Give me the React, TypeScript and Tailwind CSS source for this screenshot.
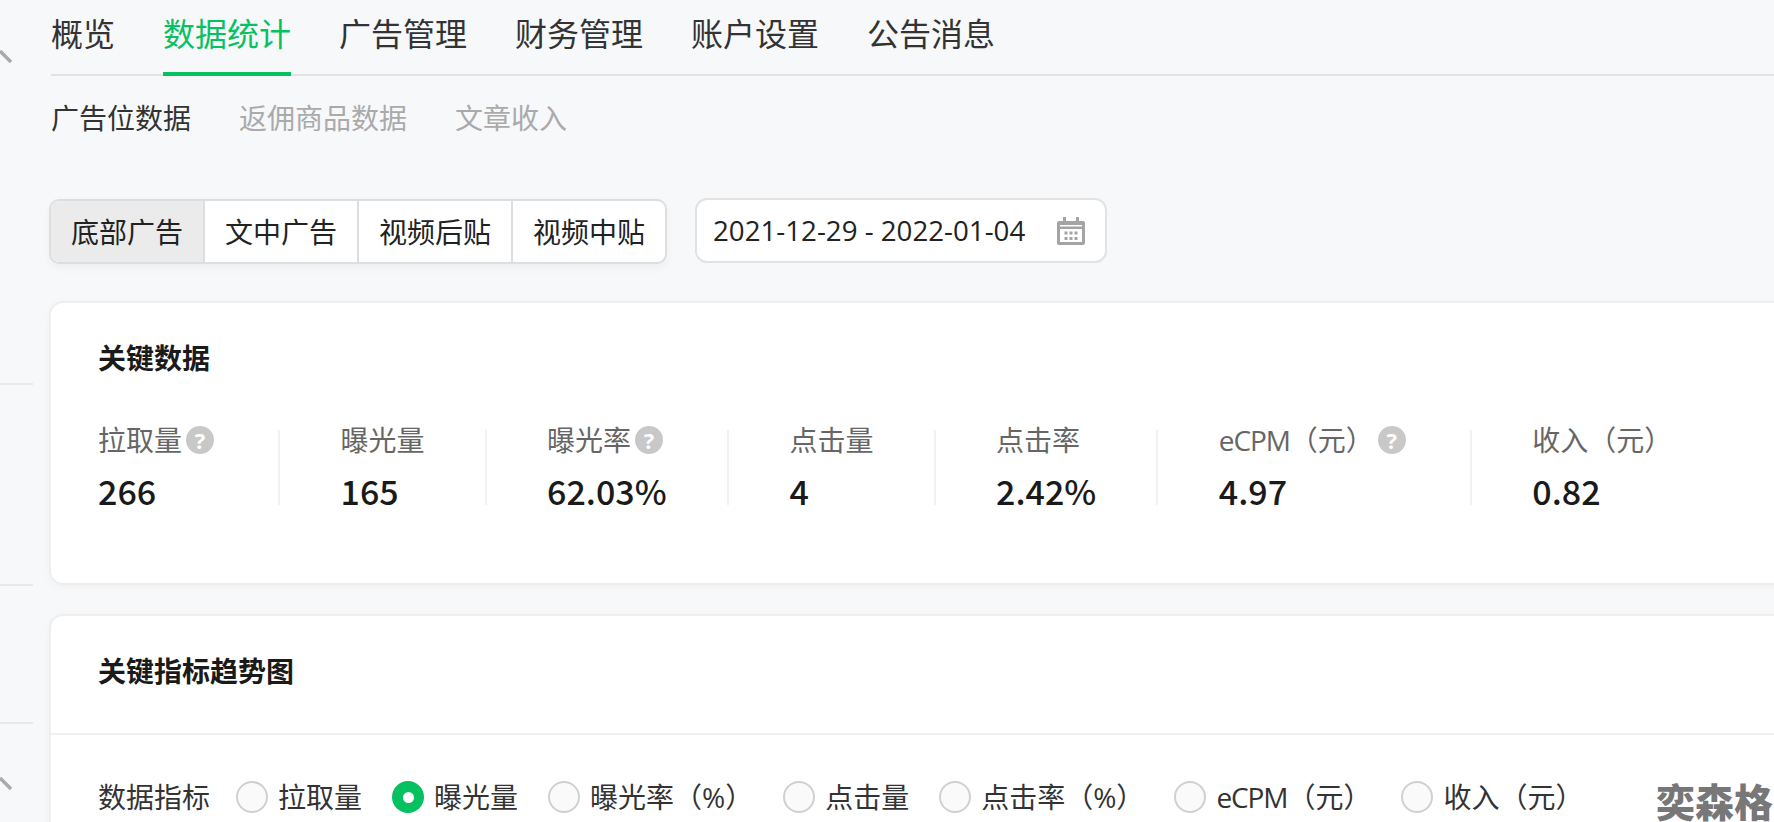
import type { ReactNode } from "react";

const sans = "font-['Open_Sans','Noto_Sans_CJK_SC',sans-serif]";

function Chevron() {
  return (
    <svg width="12" height="14" viewBox="0 0 12 14" className="block">
      <path d="M0 1 L11 12" stroke="#aaaaaa" strokeWidth="3.5" fill="none" />
    </svg>
  );
}

function Help() {
  return (
    <span className="ml-1 mr-1 flex h-7 w-7 shrink-0 items-center justify-center rounded-full bg-[#c8c8c8] text-[22px] leading-none font-bold text-white">
      ?
    </span>
  );
}

function Stat({ label, value, help, last }: { label: ReactNode; value: string; help?: boolean; last?: boolean }) {
  return (
    <div className={`flex h-[75px] flex-col justify-between ${last ? "" : "border-r-2 border-[#f2f2f2] pr-[60px]"}`}>
      <div className="flex h-5 items-center text-[28px] leading-5 text-[#666]">
        <span className="whitespace-nowrap">{label}</span>
        {help && <Help />}
      </div>
      <div className="mb-[2px] font-['Noto_Sans_CJK_SC',sans-serif] text-[34px] leading-6 font-medium text-[#1a1a1a]">{value}</div>
    </div>
  );
}

function Radio({ label, checked }: { label: ReactNode; checked?: boolean }) {
  return (
    <div className="flex items-center gap-[10px]">
      {checked ? (
        <span className="flex h-8 w-8 items-center justify-center rounded-full bg-[#07c160]">
          <span className="h-[11px] w-[11px] rounded-full bg-white" />
        </span>
      ) : (
        <span className="h-8 w-8 rounded-full border-2 border-[#d0d0d0] bg-[#fafafa]" />
      )}
      <span className="whitespace-nowrap text-[#333]">{label}</span>
    </div>
  );
}

function ECpm() {
  return (
    <>
      <span className="tracking-[-1.1px]">eCPM</span>（元）
    </>
  );
}

export default function App() {
  return (
    <div className={`relative flex h-[822px] w-full overflow-hidden bg-[#f7f8fa] ${sans}`}>
      <aside className="flex w-[33px] shrink-0 flex-col">
        <div className="h-[385px] border-b-2 border-[#e8e8e8] pt-[50px]"><Chevron /></div>
        <div className="h-[201px] border-b-2 border-[#e8e8e8]" />
        <div className="h-[138px] border-b-2 border-[#e8e8e8]" />
        <div className="pt-[53px]"><Chevron /></div>
      </aside>

      <main className="ml-4 w-[1800px] shrink-0">
        <nav className="ml-[2px] flex h-[76px] gap-12 border-b-2 border-[#e2e3e5] text-[32px] text-[#333]">
          <div className="h-[76px] pb-1 leading-[68px]">概览</div>
          <div className="h-[76px] border-b-4 border-[#07c160] leading-[68px] text-[#07c160]">数据统计</div>
          <div className="h-[76px] pb-1 leading-[68px]">广告管理</div>
          <div className="h-[76px] pb-1 leading-[68px]">财务管理</div>
          <div className="h-[76px] pb-1 leading-[68px]">账户设置</div>
          <div className="h-[76px] pb-1 leading-[68px]">公告消息</div>
        </nav>

        <div className="mt-7 ml-[2px] flex h-7 gap-12 text-[28px] leading-7 text-[#aaa]">
          <span className="text-[#333]">广告位数据</span>
          <span>返佣商品数据</span>
          <span>文章收入</span>
        </div>

        <div className="mt-[66px] flex items-start gap-[28px]">
          <div className="mt-px flex h-[65px] w-[618px] overflow-hidden rounded-[10px] border-2 border-[#dedede] bg-white text-[28px] text-[#222] shadow-[0_4px_10px_rgba(0,0,0,0.04)]">
            <div className="flex w-[154px] items-center justify-center border-r-2 border-[#dedede] bg-[#ebebeb]">底部广告</div>
            <div className="flex w-[154px] items-center justify-center border-r-2 border-[#dedede]">文中广告</div>
            <div className="flex w-[154px] items-center justify-center border-r-2 border-[#dedede]">视频后贴</div>
            <div className="flex flex-1 items-center justify-center">视频中贴</div>
          </div>
          <div className="flex h-[65px] w-[412px] items-center gap-8 rounded-xl border-2 border-[#e2e2e2] bg-white pl-4 text-[27.7px] text-[#222]">
            <span className="whitespace-nowrap">2021-12-29 - 2022-01-04</span>
            <svg width="28" height="28" viewBox="0 0 28 28" className="shrink-0">
              <path d="M6 0h3v4h10V0h3v4h4a2 2 0 0 1 2 2v20a2 2 0 0 1-2 2H2a2 2 0 0 1-2-2V6a2 2 0 0 1 2-2h4z M3 8v1.5h22V8z M3 12v13h22V12z" fill="#a4a4a4" fillRule="evenodd" />
              <path d="M7.5 14.5h3v3h-3zM12.5 14.5h3v3h-3zM17.5 14.5h3v3h-3zM7.5 20h3v3h-3zM12.5 20h3v3h-3zM17.5 20h3v3h-3z" fill="#a4a4a4" />
            </svg>
          </div>
        </div>

        <section className="mt-[37px] h-[284px] rounded-[14px] border-2 border-[#eeeeee] bg-white pt-[41px] pl-[47px] shadow-[0_2px_10px_rgba(0,0,0,0.03)]">
          <h2 className="text-[28px] leading-7 font-bold text-[#1a1a1a]">关键数据</h2>
          <div className="mt-[58px] flex gap-[60.5px]">
            <Stat label="拉取量" value="266" help />
            <Stat label="曝光量" value="165" />
            <Stat label="曝光率" value="62.03%" help />
            <Stat label="点击量" value="4" />
            <Stat label="点击率" value="2.42%" />
            <Stat label={<ECpm />} value="4.97" help />
            <Stat label="收入（元）" value="0.82" last />
          </div>
        </section>

        <section className="mt-[29px] h-[300px] rounded-[14px] border-2 border-[#eeeeee] bg-white shadow-[0_2px_10px_rgba(0,0,0,0.03)]">
          <div className="h-[119px] border-b-2 border-[#f0f0f0] pt-[41px] pl-[47px]">
            <h2 className="text-[28px] leading-7 font-bold text-[#1a1a1a]">关键指标趋势图</h2>
          </div>
          <div className="flex items-center gap-[30px] pt-[41px] pl-[47px] text-[28px]">
            <span className="mr-[-4px] whitespace-nowrap text-[#333]">数据指标</span>
            <Radio label="拉取量" />
            <Radio label="曝光量" checked />
            <Radio label="曝光率（%）" />
            <Radio label="点击量" />
            <Radio label="点击率（%）" />
            <Radio label={<ECpm />} />
            <Radio label="收入（元）" />
          </div>
        </section>
      </main>

      <div className="absolute right-px bottom-0 text-[39px] leading-[40px] font-black whitespace-nowrap text-[#777]">奕森格</div>
    </div>
  );
}
